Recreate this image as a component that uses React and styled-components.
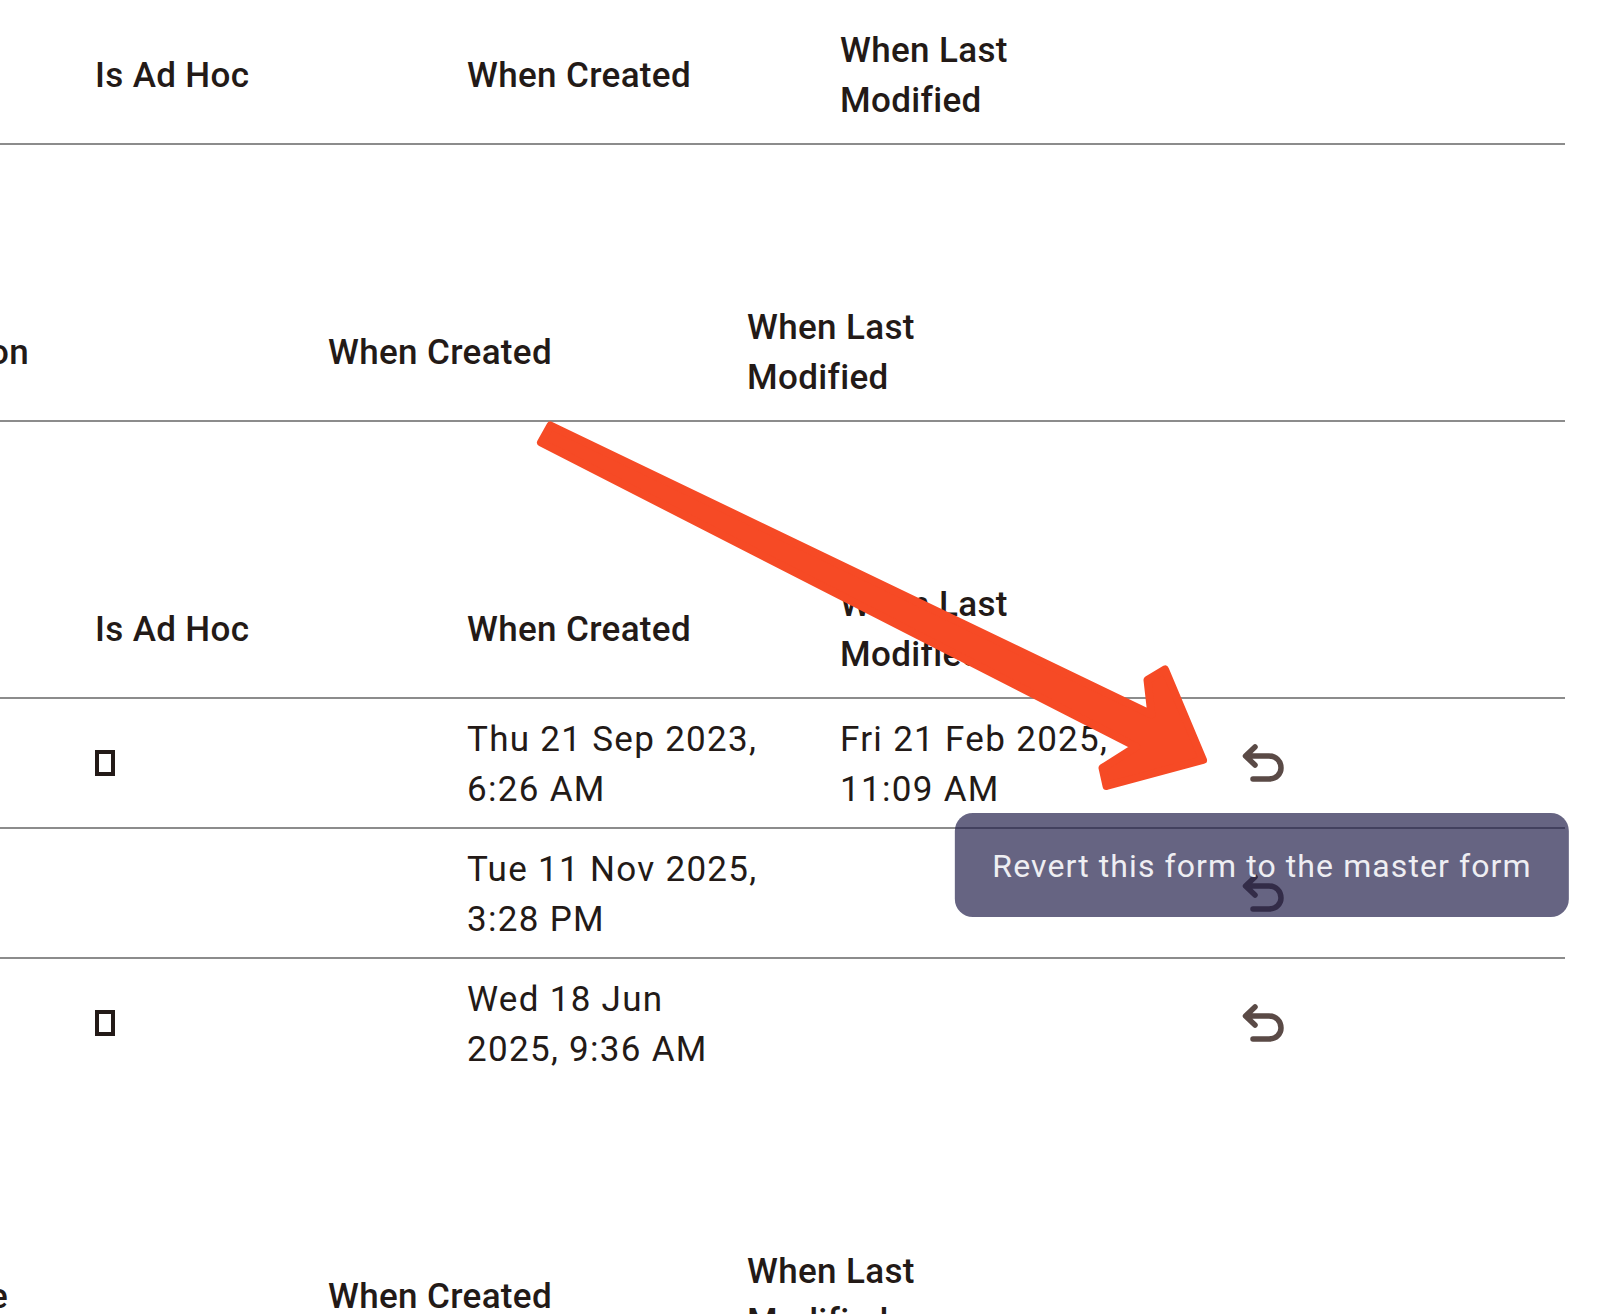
import React from "react";
import styled, { createGlobalStyle } from "styled-components";

const GlobalStyle = createGlobalStyle`
  html, body {
    margin: 0;
    padding: 0;
    background: #fff;
    overflow: hidden;
  }
`;

const Page = styled.div`
  position: relative;
  width: 1624px;
  height: 1314px;
  overflow: hidden;
  padding-top: 5px;
  box-sizing: border-box;
  font-family: Roboto, "Noto Sans", sans-serif;
  color: #231a17;
`;

const Table = styled.section`
  width: 1565px;
  margin-bottom: 137px;
`;

const Row = styled.div`
  display: grid;
  grid-template-columns: ${(props) => props.$columns};
  align-items: center;
  height: ${(props) => (props.$header ? "138px" : "128px")};
  border-bottom: 2px solid ${(props) => (props.$last ? "transparent" : "#8c8c8c")};
`;

const HeaderCell = styled.div`
  padding-top: 4px;
  font-size: 35px;
  font-weight: 475;
  line-height: 50px;
  letter-spacing: 0.35px;
  white-space: nowrap;
`;

// the table is scrolled sideways, only the end of this column's title shows
const ClippedHeaderCell = styled(HeaderCell)`
  margin-left: -11px;
`;

const Cell = styled.div`
  padding-top: 4px;
  font-size: 35px;
  font-weight: 400;
  line-height: 50px;
  letter-spacing: 1.3px;
  white-space: nowrap;
`;

const Checkbox = styled.span`
  display: block;
  width: 20px;
  height: 26px;
  box-sizing: border-box;
  border: 4px solid #231a17;
`;

const ActionCell = styled.div`
  padding-left: 16px;
`;

const IconWrap = styled.div`
  position: relative;
  width: 44px;
  height: 44px;
`;

const Tooltip = styled.div`
  position: absolute;
  z-index: 2;
  top: 72px;
  left: 50%;
  transform: translateX(calc(-50% - 2px));
  height: 104px;
  display: flex;
  align-items: center;
  padding: 2px 37.5px 0;
  box-sizing: border-box;
  border-radius: 18px;
  background: rgba(33, 30, 74, 0.69);
  color: #eeeef2;
  font-size: 32px;
  letter-spacing: 1.09px;
  white-space: nowrap;
`;

const ArrowOverlay = styled.svg`
  position: absolute;
  top: 0;
  left: 0;
  z-index: 3;
  pointer-events: none;
`;

const WIDE = "95px 372px 373px 386px 339px";
const NARROW = "328px 419px 1fr";

function RevertIcon() {
  return (
    <svg width="44" height="44" viewBox="0 0 44 44" fill="none">
      <path
        d="M13 6 L3.5 15 L13 24 M4 15 H27 C34 15 39 20 39 27 C39 33 34 38 27 38 H11"
        stroke="#5a4a46"
        strokeWidth="5.5"
        strokeLinecap="round"
        strokeLinejoin="round"
      />
    </svg>
  );
}

function Wide() {
  return (
    <Row $header $columns={WIDE}>
      <span />
      <HeaderCell>Is Ad Hoc</HeaderCell>
      <HeaderCell>When Created</HeaderCell>
      <HeaderCell>
        When Last
        <br />
        Modified
      </HeaderCell>
    </Row>
  );
}

function Narrow({ tail }) {
  return (
    <Row $header $columns={NARROW}>
      <ClippedHeaderCell>{tail}</ClippedHeaderCell>
      <HeaderCell>When Created</HeaderCell>
      <HeaderCell>
        When Last
        <br />
        Modified
      </HeaderCell>
    </Row>
  );
}

const forms = [
  { adHoc: true, created: ["Thu 21 Sep 2023,", "6:26 AM"], modified: ["Fri 21 Feb 2025,", "11:09 AM"], tip: true },
  { adHoc: false, created: ["Tue 11 Nov 2025,", "3:28 PM"] },
  { adHoc: true, created: ["Wed 18 Jun", "2025, 9:36 AM"], last: true },
];

export default function App() {
  return (
    <Page>
      <GlobalStyle />
      <Table>
        <Wide />
      </Table>
      <Table>
        <Narrow tail="on" />
      </Table>
      <Table>
        <Wide />
        {forms.map((form) => (
          <Row key={form.created[0]} $columns={WIDE} $last={form.last}>
            <span />
            <div>{form.adHoc && <Checkbox />}</div>
            <Cell>
              {form.created[0]}
              <br />
              {form.created[1]}
            </Cell>
            <Cell>
              {form.modified && (
                <>
                  {form.modified[0]}
                  <br />
                  {form.modified[1]}
                </>
              )}
            </Cell>
            <ActionCell>
              <IconWrap>
                <RevertIcon />
                {form.tip && <Tooltip>Revert this form to the master form</Tooltip>}
              </IconWrap>
            </ActionCell>
          </Row>
        ))}
      </Table>
      <Table>
        <Narrow tail="e" />
      </Table>
      <ArrowOverlay width="1624" height="1314" viewBox="0 0 1624 1314">
        <polygon
          points="550.5,425.5 541,442.5 1136.2,746.7 1102.5,768 1106.5,786 1203,760 1165,669.5 1147.5,680 1151.4,714.4"
          fill="#f64a25"
          stroke="#f64a25"
          strokeWidth="8"
          strokeLinejoin="round"
        />
      </ArrowOverlay>
    </Page>
  );
}
